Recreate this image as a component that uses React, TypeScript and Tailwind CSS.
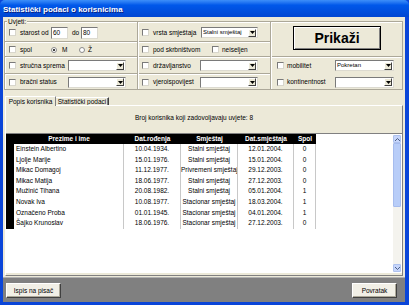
import React from "react";

const rows: string[][] = [
  ["Einstein Albertino", "10.04.1934.", "Stalni smještaj", "12.01.2004.", "0"],
  ["Ljolje Marije", "15.01.1976.", "Stalni smještaj", "15.01.2004.", "0"],
  ["Mikac Domagoj", "11.12.1977.", "Privremeni smještaj", "29.12.2003.", "0"],
  ["Mikac Matija", "18.06.1977.", "Stalni smještaj", "27.12.2003.", "0"],
  ["Mužinić Tihana", "20.08.1982.", "Stalni smještaj", "05.01.2004.", "1"],
  ["Novak Iva", "10.08.1977.", "Stacionar smještaj", "18.03.2004.", "1"],
  ["Označeno Proba", "01.01.1945.", "Stacionar smještaj", "04.01.2004.", "1"],
  ["Šajko Krunoslav", "18.06.1976.", "Stacionar smještaj", "27.12.2003.", "0"],
];

function Check() {
  return (
    <div className="w-[7px] h-[7px] shrink-0 bg-white border border-t-[#7a7a7a] border-l-[#7a7a7a] border-r-[#d8d6cc] border-b-[#d8d6cc]" />
  );
}

function Radio({ on }: { on?: boolean }) {
  return (
    <div className="w-[6px] h-[6px] shrink-0 rounded-full bg-white border border-[#8a8a8a] flex items-center justify-center">
      {on && <div className="w-[2px] h-[2px] rounded-full bg-black" />}
    </div>
  );
}

function Select({ w, text }: { w: string; text?: string }) {
  return (
    <div
      className={`${w} h-[11px] shrink-0 bg-white border border-t-[#7a7a7a] border-l-[#7a7a7a] border-r-[#dcdad0] border-b-[#dcdad0] flex items-center pl-[1px]`}
    >
      <span className="flex-1 text-[6px] leading-[9px] whitespace-nowrap overflow-hidden">{text}</span>
      <div className="w-[8px] h-[8px] mr-[1px] bg-[#ece9d8] border border-t-white border-l-white border-r-[#404040] border-b-[#404040] flex items-center justify-center">
        <svg width="5" height="3" viewBox="0 0 5 3">
          <path d="M0 0H5L2.5 3Z" fill="#000" />
        </svg>
      </div>
    </div>
  );
}

function Input({ text }: { text: string }) {
  return (
    <div className="w-[17px] h-[12px] shrink-0 bg-white border border-t-[#7a7a7a] border-l-[#7a7a7a] border-r-[#dcdad0] border-b-[#dcdad0] pl-[1px] text-[6.5px] leading-[10px]">
      {text}
    </div>
  );
}

function HSep() {
  return <div className="h-[2px] shrink-0 border-t border-t-[#aca899] border-b border-b-white" />;
}

function VSep() {
  return <div className="w-[2px] shrink-0 border-l border-l-[#aca899] border-r border-r-white" />;
}

function Label({ w, children }: { w: string; children: React.ReactNode }) {
  return <span className={`${w} shrink-0 text-[6.5px] leading-[8px] whitespace-nowrap`}>{children}</span>;
}

function Arrow({ up }: { up?: boolean }) {
  return (
    <div className="h-[8px] shrink-0 bg-[#c6d5fb] border border-[#aec2ee] rounded-[1px] flex items-center justify-center">
      <svg width="5" height="3" viewBox="0 0 5 3">
        <path d={up ? "M0 3L2.5 0.5L5 3" : "M0 0L2.5 2.5L5 0"} stroke="#4d6185" strokeWidth="1" fill="none" />
      </svg>
    </div>
  );
}

export default function App() {
  return (
    <div className="w-[409px] h-[305px] flex flex-col bg-[#0a45d8] overflow-hidden font-['Liberation_Sans',Arial,sans-serif] text-black">
      {/* title bar */}
      <div className="h-[17px] shrink-0 rounded-t-[5px] bg-[#0058ea] bg-linear-to-b from-[#3d8ff9] via-[#0058ea] via-30% to-[#0046d2] pl-[3px] pt-[5px] flex items-start">
        <span className="text-white font-bold text-[8px] leading-[10px] [text-shadow:1px_1px_0_#0a1e80] whitespace-nowrap">
          Statistički podaci o korisnicima
        </span>
      </div>

      {/* client area */}
      <div className="flex-1 flex flex-col pl-[3px] pr-[4px] pb-[3px]">
        <div className="flex-1 flex flex-col bg-[#ece9d8]">
          {/* group box */}
          <div className="relative mt-[4px] ml-[1px] mr-[2px] h-[69px] shrink-0 border border-[#aca899] shadow-[inset_1px_1px_0_#fff] flex">
            <span className="absolute left-[2px] -top-[4px] bg-[#ece9d8] px-[1px] text-[6.5px] leading-[7px]">Uvjeti:</span>

            {/* column 1 */}
            <div className="w-[132px] shrink-0 flex flex-col">
              <div className="h-[19px] flex items-center pl-[4px] pt-[2px]">
                <Check />
                <span className="w-[4px]" />
                <Label w="w-[31px]">starost od</Label>
                <Input text="60" />
                <span className="w-[4px]" />
                <Label w="w-[9px]">do</Label>
                <Input text="80" />
              </div>
              <HSep />
              <div className="h-[13px] flex items-center pl-[4px]">
                <Check />
                <span className="w-[4px]" />
                <Label w="w-[31px]">spol</Label>
                <Radio on />
                <span className="w-[5px]" />
                <Label w="w-[17px]">M</Label>
                <Radio />
                <span className="w-[3px]" />
                <Label w="w-[10px]">Ž</Label>
              </div>
              <HSep />
              <div className="h-[15px] flex items-center pl-[4px]">
                <Check />
                <span className="w-[4px]" />
                <Label w="w-[48px]">stručna sprema</Label>
                <Select w="w-[58px]" />
              </div>
              <HSep />
              <div className="h-[14px] flex items-center pl-[4px]">
                <Check />
                <span className="w-[4px]" />
                <Label w="w-[48px]">bračni status</Label>
                <Select w="w-[58px]" />
              </div>
            </div>

            <VSep />

            {/* column 2 */}
            <div className="w-[131px] shrink-0 flex flex-col">
              <div className="h-[19px] flex items-center pl-[3px] pt-[2px]">
                <Check />
                <span className="w-[4px]" />
                <Label w="w-[48px]">vrsta smještaja</Label>
                <Select w="w-[57px]" text="Stalni smještaj" />
              </div>
              <HSep />
              <div className="h-[13px] flex items-center pl-[3px]">
                <Check />
                <span className="w-[4px]" />
                <Label w="w-[59px]">pod skrbništvom</Label>
                <Check />
                <span className="w-[3px]" />
                <Label w="w-[30px]">neiseljen</Label>
              </div>
              <HSep />
              <div className="h-[15px] flex items-center pl-[3px]">
                <Check />
                <span className="w-[4px]" />
                <Label w="w-[47px]">državljanstvo</Label>
                <Select w="w-[58px]" />
              </div>
              <HSep />
              <div className="h-[14px] flex items-center pl-[3px]">
                <Check />
                <span className="w-[4px]" />
                <Label w="w-[47px]">vjeroispovijest</Label>
                <Select w="w-[58px]" />
              </div>
            </div>

            <VSep />

            {/* column 3 */}
            <div className="flex-1 flex flex-col">
              <div className="h-[34px] flex justify-center pt-[4px]">
                <div className="w-[88px] h-[24px] bg-[#ece9d8] border border-black shadow-[inset_1px_1px_0_#fff,inset_-1px_-1px_0_#808080] flex items-center justify-center">
                  <span className="font-bold text-[14px] leading-[16px]">Prikaži</span>
                </div>
              </div>
              <HSep />
              <div className="h-[15px] flex items-center pl-[5px]">
                <Check />
                <span className="w-[3px]" />
                <Label w="w-[48px]">mobilitet</Label>
                <Select w="w-[59px]" text="Pokretan" />
              </div>
              <div className="h-[2px]" />
              <div className="h-[14px] flex items-center pl-[5px]">
                <Check />
                <span className="w-[3px]" />
                <Label w="w-[48px]">kontinentnost</Label>
                <Select w="w-[59px]" />
              </div>
            </div>
          </div>

          {/* tabs */}
          <div className="mt-[6px] h-[9px] shrink-0 flex ml-[2px] items-start">
            <div className="relative z-10 w-[51px] h-[10px] bg-[#ece9d8] border-t border-l border-t-white border-l-white border-r border-r-[#808080] flex items-center justify-center text-[6.5px] leading-[8px] whitespace-nowrap">
              Popis korisnika
            </div>
            <div className="w-[53px] h-[9px] mt-[1px] bg-[#ece9d8] border-t border-t-white border-r border-r-[#404040] shadow-[inset_-1px_0_0_#808080] flex items-center justify-center text-[6.5px] leading-[8px] whitespace-nowrap">
              Statistički podaci
            </div>
          </div>

          {/* tab panel */}
          <div className="h-[171px] shrink-0 ml-[2px] mr-[2px] border border-t-white border-l-white border-r-[#808080] border-b-[#808080] flex flex-col">
            <div className="h-[27px] shrink-0 flex items-center justify-center pr-[20px] text-[6.5px] leading-[8px] pb-[4px]">
              Broj korisnika koji zadovoljavaju uvjete: 8
            </div>
            <div className="h-[140px] shrink-0 bg-white border-t border-t-[#808080] flex pr-[1px]">
              <div className="flex-1 flex flex-col">
                <div className="flex h-[10px] text-white font-bold text-[6.5px] leading-[10px]">
                  <div className="w-[8px] bg-black" />
                  <div className="w-[110px] bg-black text-center">Prezime i ime</div>
                  <div className="w-[57px] bg-black text-center">Dat.rođenja</div>
                  <div className="w-[57px] bg-black text-center">Smještaj</div>
                  <div className="w-[56px] bg-black text-center">Dat.smještaja</div>
                  <div className="w-[22px] bg-black text-center">Spol</div>
                </div>
                {rows.map((r, i) => (
                  <div key={i} className="flex h-[10.6px] text-[6.5px] leading-[10.6px] whitespace-nowrap">
                    <div className="w-[8px] bg-black" />
                    <div className="w-[110px] pl-[2px] border-r border-r-[#c8c8c8]">{r[0]}</div>
                    <div className="w-[57px] text-center border-r border-r-[#c8c8c8]">{r[1]}</div>
                    <div className="w-[57px] text-center border-r border-r-[#c8c8c8] overflow-hidden">{r[2]}</div>
                    <div className="w-[56px] text-center border-r border-r-[#c8c8c8]">{r[3]}</div>
                    <div className="w-[22px] text-center border-r border-r-[#c8c8c8]">{r[4]}</div>
                  </div>
                ))}
              </div>
              {/* scrollbar */}
              <div className="w-[8px] shrink-0 my-[1px] flex flex-col bg-[#f4f3ee]">
                <Arrow up />
                <div className="h-[64px] shrink-0 bg-[#b8cdf8] border border-[#a6bcee] rounded-[1px]" />
                <div className="flex-1" />
                <Arrow />
              </div>
            </div>
          </div>

          {/* bottom bar */}
          <div className="mt-[1px] flex-1 bg-[#808080] border-t border-t-[#b0b0b0] flex justify-between items-start pt-[5px] pl-[3px] pr-[8px]">
            <div className="w-[55px] h-[15px] bg-[#f1efe6] border border-t-white border-l-white border-r-[#404040] border-b-[#404040] shadow-[inset_-1px_-1px_0_#aca899] flex items-center justify-center text-[6.5px] leading-[8px] whitespace-nowrap">
              Ispis na pisač
            </div>
            <div className="w-[45px] h-[15px] bg-[#f1efe6] border border-t-white border-l-white border-r-[#404040] border-b-[#404040] shadow-[inset_-1px_-1px_0_#aca899] flex items-center justify-center text-[6.5px] leading-[8px] whitespace-nowrap">
              Povratak
            </div>
          </div>
        </div>
      </div>
    </div>
  );
}
